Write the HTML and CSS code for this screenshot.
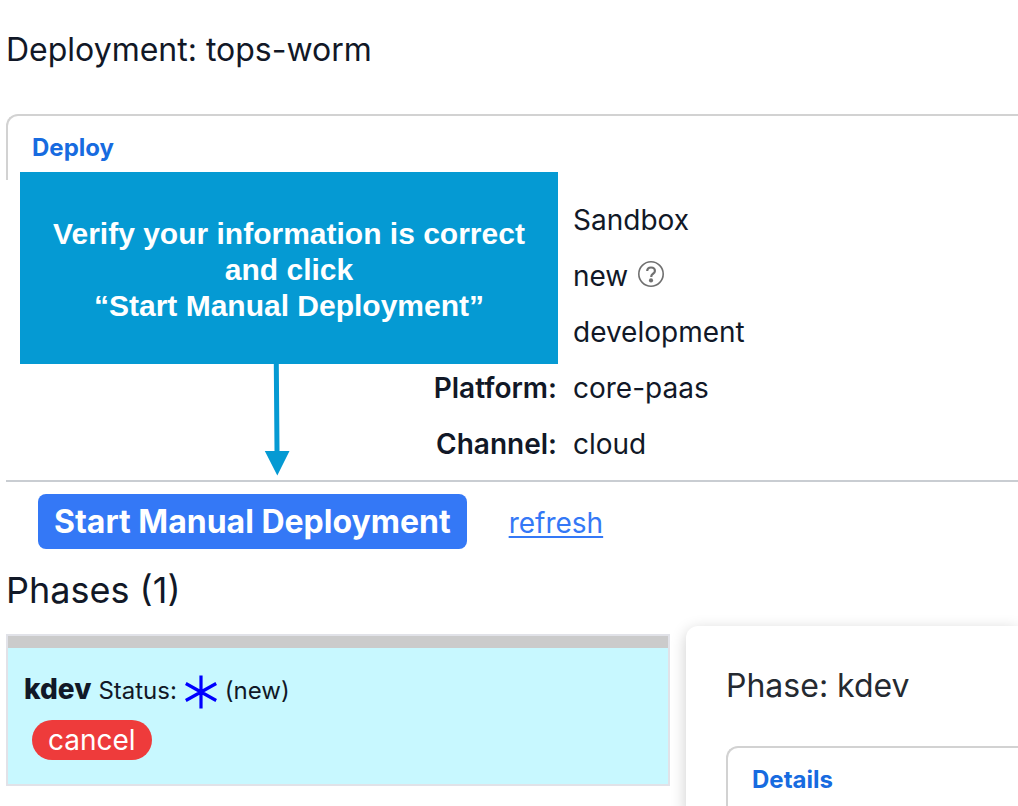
FILE: index.html
```html
<!DOCTYPE html>
<html lang="en">
<head>
<meta charset="utf-8">
<meta name="viewport" content="width=device-width, initial-scale=1">
<title>Deployment: tops-worm</title>
<link rel="stylesheet" href="styles.css">
</head>
<body>
<main class="page">
  <h1 class="title">Deployment: tops-worm</h1>

  <section class="deploy">
    <nav class="tabs"><a class="tab" href="#deploy">Deploy</a></nav>
    <dl class="facts" id="deploy">
      <dt></dt><dd>Sandbox</dd>
      <dt></dt>
      <dd>new
        <svg class="help" viewBox="0 0 26 26" role="img" aria-label="Help">
          <circle cx="13" cy="13" r="12.2" fill="none" stroke="#707070" stroke-width="1.6"/>
          <path d="M9.2 10.1C9.2 7.8 10.800 6.500 13 6.500s3.900 1.300 3.900 3.400c0 3-3.600 2.700-3.600 5.400v.6" fill="none" stroke="#707070" stroke-width="2.2"/>
          <circle cx="13" cy="19.400" r="2.100" fill="#707070"/>
        </svg>
      </dd>
      <dt></dt><dd>development</dd>
      <dt>Platform:</dt><dd>core-paas</dd>
      <dt>Channel:</dt><dd>cloud</dd>
    </dl>
    <aside class="callout">
      <p class="callout-text">Verify your information is correct<br>and click<br>“Start Manual Deployment”</p>
      <svg class="arrow" viewBox="0 0 26 112" aria-hidden="true">
        <path d="M9.800 0h5l.7 87h10L13.300 111.500.8 87h9.700z" fill="#059ad3"/>
      </svg>
    </aside>
  </section>

  <div class="actions">
    <button class="start" type="button">Start Manual Deployment</button>
    <a class="refresh" href="#refresh">refresh</a>
  </div>

  <div class="phases">
    <section class="phase-list">
      <h2 class="phases-title">Phases (1)</h2>
      <article class="phase">
        <p class="status"><strong class="name">kdev</strong> Status:
          <svg class="star" viewBox="0 0 34 34" aria-hidden="true">
            <path d="M17 .5v33M1.800 8.500l30.400 17M32.200 8.500l-30.400 17" fill="none" stroke="#0000ff" stroke-width="3.200"/>
          </svg>
          (new)</p>
        <button class="cancel" type="button">cancel</button>
      </article>
    </section>
    <section class="detail">
      <h2 class="detail-title">Phase: kdev</h2>
      <nav class="tabs"><a class="tab" href="#details">Details</a></nav>
    </section>
  </div>
</main>
</body>
</html>
```
FILE: styles.css
```css
* {
  box-sizing: border-box;
}

body {
  margin: 0;
  overflow: hidden;
  height: 100vh;
  background: #fff;
  color: #111827;
  font-family: Inter, sans-serif;
  font-size: 28px;
}

.page {
  padding: 30px 0 0 6px;
}

.title,
.detail-title {
  margin: 0;
  font-size: 32px;
  font-weight: 400;
  line-height: 40px;
}

.title {
  padding-bottom: 44px;
}

.deploy {
  position: relative;
  border-bottom: 2px solid #c9cdd2;
}

.tabs {
  display: flex;
  align-items: flex-start;
  padding: 16px 24px;
  border: 2px solid #d2d2d2;
  border-width: 2px 0 0 2px;
  border-top-left-radius: 12px;
}

.tab {
  color: #176be0;
  font-size: 24px;
  font-weight: 700;
  line-height: 32px;
  text-decoration: none;
}

.facts {
  display: grid;
  grid-template-columns: minmax(0, 551px) 1fr;
  column-gap: 16px;
  margin: 0;
  padding: 12px 0 8px;
  line-height: 56px;
}

.facts dt {
  font-weight: 600;
  text-align: right;
}

.facts dd {
  display: flex;
  gap: 10px;
  margin: 0;
}

.help {
  width: 26px;
  height: 26px;
  margin-top: 13px;
}

.callout {
  position: absolute;
  top: 58px;
  left: 14px;
  width: 538px;
}

.callout-text {
  margin: 0;
  padding: 44px 0 40px;
  background: #059ad3;
  color: #fff;
  font-family: "Liberation Sans", Arial, sans-serif;
  font-size: 30px;
  font-weight: 700;
  line-height: 36px;
  text-align: center;
}

.arrow {
  display: block;
  width: 26px;
  height: 112px;
  margin-left: 244px;
}

.actions {
  display: flex;
  align-items: center;
  gap: 42px;
  padding: 12px 32px 0;
}

.start {
  padding: 0 16px;
  border: 0;
  border-radius: 8px;
  background: #3478f6;
  color: #fff;
  font-family: inherit;
  font-size: 32px;
  font-weight: 700;
  line-height: 55px;
  white-space: nowrap;
}

.refresh {
  padding-top: 2px;
  color: #3478f6;
  text-decoration-thickness: 2px;
  text-underline-offset: 3px;
}

.phases {
  display: flex;
  align-items: flex-start;
  gap: 16px;
}

.phase-list {
  flex: 0 1 664px;
  padding-top: 17px;
}

.phases-title {
  margin: 0 0 20px;
  font-size: 36px;
  font-weight: 400;
  line-height: 48px;
}

.phase {
  padding: 0 16px 24px;
  border: 2px solid #e1e2e8;
  background: #c8f8ff;
}

.phase::before {
  content: "";
  display: block;
  height: 12px;
  margin: 0 -16px 21px;
  background: #cbcbcb;
}

.status {
  display: flex;
  align-items: baseline;
  gap: 7px;
  margin: 0;
  font-size: 24px;
  line-height: 40px;
}

.name {
  font-size: 28px;
  font-weight: 800;
}

.star {
  align-self: flex-start;
  width: 34px;
  height: 34px;
  margin-top: 6px;
}

.cancel {
  display: block;
  margin: 9px 8px 0;
  padding: 0 16px;
  border: 0;
  border-radius: 20px;
  background: #ee3b3b;
  color: #fff;
  font-family: inherit;
  font-size: 28px;
  font-weight: 400;
  line-height: 40px;
}

.detail {
  flex: 1;
  min-width: 0;
  margin-top: 77px;
  padding: 40px 0 0 40px;
  border-top-left-radius: 12px;
  box-shadow: 0 4px 16px rgba(0, 0, 0, 0.2);
  color: #252a31;
}

.detail-title {
  padding-bottom: 40px;
}
```
